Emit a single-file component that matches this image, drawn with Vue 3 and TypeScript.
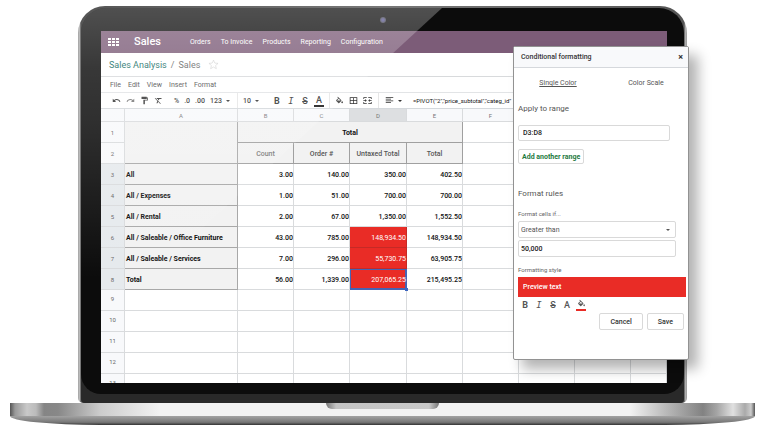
<script setup lang="ts">
import { ref } from 'vue'

interface Row {
  label: string
  values: string[]
}

const menus: string[] = ['Orders', 'To Invoice', 'Products', 'Reporting', 'Configuration']
const sheetMenus: string[] = ['File', 'Edit', 'View', 'Insert', 'Format']
const columns: string[] = ['A', 'B', 'C', 'D', 'E', 'F', '', '', '']
const measures: string[] = ['Count', 'Order #', 'Untaxed Total', 'Total']
const rows: Row[] = [
  { label: 'All', values: ['3.00', '140.00', '350.00', '402.50'] },
  { label: 'All / Expenses', values: ['1.00', '51.00', '700.00', '700.00'] },
  { label: 'All / Rental', values: ['2.00', '67.00', '1,350.00', '1,552.50'] },
  { label: 'All / Saleable / Office Furniture', values: ['43.00', '785.00', '148,934.50', '148,934.50'] },
  { label: 'All / Saleable / Services', values: ['7.00', '296.00', '55,730.75', '63,905.75'] },
  { label: 'Total', values: ['56.00', '1,339.00', '207,065.25', '215,495.25'] },
]
const emptyRows: number[] = [9, 10, 11, 12, 13]

const range = ref('D3:D8')
const operator = ref('Greater than')
const threshold = ref('50,000')

const amount = (text: string): number => Number(text.replace(/,/g, ''))
const isHot = (text: string, column: number): boolean =>
  column === 2 && amount(text) > amount(threshold.value)

const icons = {
  undo: 'M12.5 8c-2.65 0-5.05.99-6.9 2.6L2 7v9h9l-3.62-3.62c1.39-1.16 3.16-1.88 5.12-1.88 3.54 0 6.55 2.31 7.6 5.5l2.37-.78C21.08 11.03 17.15 8 12.5 8z',
  redo: 'M18.4 10.6C16.55 8.99 14.15 8 11.5 8c-4.65 0-8.58 3.03-9.96 7.22L3.9 16c1.05-3.19 4.05-5.5 7.6-5.5 1.95 0 3.73.72 5.12 1.88L13 16h9V7l-3.6 3.6z',
  paint: 'M18 4V3c0-.55-.45-1-1-1H5c-.55 0-1 .45-1 1v4c0 .55.45 1 1 1h12c.55 0 1-.45 1-1V6h1v4H9v11c0 .55.45 1 1 1h2c.55 0 1-.45 1-1v-9h8V4h-3z',
  clear: 'M3.27 5L2 6.27l6.97 6.97L6.5 19h3l1.57-3.66L16.73 21 18 19.73 3.55 5.27 3.27 5zM6 5v.18L8.82 8h2.4l-.72 1.68 2.1 2.1L14.21 8H20V5H6z',
  fill: 'M16.56 8.94L7.62 0 6.21 1.41l2.38 2.38-5.15 5.15c-.59.59-.59 1.54 0 2.12l5.5 5.5c.29.29.68.44 1.06.44s.77-.15 1.06-.44l5.5-5.5c.59-.58.59-1.53 0-2.12zM5.21 10L10 5.21 14.79 10H5.21zM19 11.5s-2 2.17-2 3.5c0 1.1.9 2 2 2s2-.9 2-2c0-1.33-2-3.5-2-3.5z',
  borders: 'M2 3v18h20V3H2zm9 16H4v-6h7v6zm0-8H4V5h7v6zm9 8h-7v-6h7v6zm0-8h-7V5h7v6z',
  merge: 'M1 3h9v2H3v3H1zM14 3h9v5h-2V5h-7zM1 16h2v3h7v2H1zM21 16h2v5h-9v-2h7zM1 11h5V8l4 4-4 4v-3H1zM23 11h-5V8l-4 4 4 4v-3h5z',
  align: 'M2 3h20v2H2zM2 7.500h14v2H2zM2 12h20v2H2zM2 16.500h14v2H2z',
}
</script>

<template>
  <main class="stage">
    <section class="lid">
      <div class="panel">
        <span class="camera"></span>
        <div class="screen">
          <nav class="navbar">
            <button class="apps" aria-label="Apps"><i v-for="n in 9" :key="n"></i></button>
            <a class="brand" href="#">Sales</a>
            <a v-for="menu in menus" :key="menu" href="#">{{ menu }}</a>
          </nav>

          <div class="crumbs">
            <a href="#">Sales Analysis</a><span class="slash">/</span><span>Sales</span>
            <button class="star" aria-label="Favorite">
              <svg viewBox="0 0 24 24"><path d="M12 2.500l2.900 6.400 7 .7-5.300 4.700 1.600 6.900-6.200-3.700-6.200 3.700 1.600-6.900-5.300-4.700 7-.7z" /></svg>
            </button>
          </div>

          <div class="sheet-menu">
            <button v-for="menu in sheetMenus" :key="menu">{{ menu }}</button>
          </div>

          <div class="toolbar">
            <button class="tool" aria-label="Undo"><svg viewBox="0 0 24 24"><path :d="icons.undo" /></svg></button>
            <button class="tool light" aria-label="Redo"><svg viewBox="0 0 24 24"><path :d="icons.redo" /></svg></button>
            <button class="tool" aria-label="Paint format"><svg viewBox="0 0 24 24"><path :d="icons.paint" /></svg></button>
            <button class="tool" aria-label="Clear format"><svg viewBox="0 0 24 24"><path :d="icons.clear" /></svg></button>
            <div class="numbers">
              <button>%</button>
              <button>.0</button>
              <button>.00</button>
              <button>123<b class="caret"></b></button>
            </div>
            <span class="rule"></span>
            <button class="size">10<b class="caret"></b></button>
            <button class="tool bold">B</button>
            <button class="tool italic">I</button>
            <button class="tool strike">S</button>
            <button class="tool color">A</button>
            <span class="rule"></span>
            <button class="tool" aria-label="Fill color"><svg viewBox="0 -2 24 24"><path :d="icons.fill" /></svg></button>
            <button class="tool" aria-label="Borders"><svg viewBox="0 0 24 24"><path :d="icons.borders" /></svg></button>
            <button class="tool" aria-label="Merge cells"><svg viewBox="0 0 24 24"><path :d="icons.merge" /></svg></button>
            <span class="rule"></span>
            <button class="align" aria-label="Align"><svg viewBox="0 0 24 24"><path :d="icons.align" /></svg><b class="caret"></b></button>
            <span class="formula">=PIVOT("2","price_subtotal","categ_id"</span>
          </div>

          <div class="sheet">
            <table>
              <colgroup>
                <col class="c-num" /><col class="c-label" /><col class="c" /><col class="c" /><col class="c-wide" />
                <col class="c" /><col class="c" /><col class="c" /><col class="c" /><col />
              </colgroup>
              <thead>
                <tr class="letters">
                  <th></th>
                  <th v-for="(c, i) in columns" :key="i" :class="{ active: c === 'D' }">{{ c }}</th>
                </tr>
              </thead>
              <tbody>
                <tr>
                  <th class="num">1</th>
                  <th class="label corner" rowspan="2"></th>
                  <th class="head total" colspan="4">Total</th>
                  <td v-for="n in 4" :key="n"></td>
                </tr>
                <tr>
                  <th class="num">2</th>
                  <th v-for="(m, i) in measures" :key="m" class="head" :class="{ soft: i === 0 }">{{ m }}</th>
                  <td v-for="n in 4" :key="n"></td>
                </tr>
                <tr v-for="(row, r) in rows" :key="row.label">
                  <th class="num on">{{ r + 3 }}</th>
                  <th class="label">{{ row.label }}</th>
                  <td
                    v-for="(value, i) in row.values"
                    :key="i"
                    :class="{ hot: isHot(value, i), selected: r === 5 && i === 2 }"
                  >{{ value }}</td>
                  <td v-for="n in 4" :key="'e' + n"></td>
                </tr>
                <tr v-for="n in emptyRows" :key="n">
                  <th class="num blank">{{ n }}</th>
                  <td v-for="(c, i) in columns" :key="i"></td>
                </tr>
              </tbody>
            </table>
          </div>
        </div>
        <div class="glare"></div>
      </div>
      <div class="hinge"></div>

      <aside class="dialog">
        <header>
          <h2>Conditional formatting</h2>
          <button aria-label="Close">×</button>
        </header>
        <form @submit.prevent>
          <div class="tabs">
            <button type="button" class="current">Single Color</button>
            <button type="button">Color Scale</button>
          </div>
          <label class="title" for="range">Apply to range</label>
          <input id="range" v-model="range" class="range" type="text" />
          <button type="button" class="add">Add another range</button>
          <h3 class="title">Format rules</h3>
          <label class="small" for="operator">Format cells if...</label>
          <div class="select">
            <select id="operator" v-model="operator">
              <option>Greater than</option>
            </select>
            <b class="caret"></b>
          </div>
          <input v-model="threshold" class="value" type="text" aria-label="Value" />
          <p class="small style-label">Formatting style</p>
          <div class="preview">Preview text</div>
          <div class="styles">
            <button type="button" class="tool bold">B</button>
            <button type="button" class="tool italic">I</button>
            <button type="button" class="tool strike">S</button>
            <button type="button" class="tool">A</button>
            <button type="button" class="tool fill" aria-label="Fill color"><svg viewBox="0 -2 24 24"><path :d="icons.fill" /></svg></button>
          </div>
          <footer>
            <button type="button">Cancel</button>
            <button type="submit">Save</button>
          </footer>
        </form>
      </aside>
    </section>

    <div class="base">
      <div class="deck"><span class="notch"></span></div>
      <div class="foot"></div>
    </div>
  </main>
</template>

<style>
body {
  background: #fff;
}
</style>

<style scoped>
* {
  box-sizing: border-box;
}

.stage {
  padding: 6px 15px 2px 10px;
  overflow: hidden;
  font: 7px/10px Roboto, "Liberation Sans", sans-serif;
  color: #333;
}

button,
input,
select {
  margin: 0;
  padding: 0;
  border: 0;
  background: none;
  color: inherit;
  font: inherit;
}

a {
  color: inherit;
  text-decoration: none;
}

svg {
  display: block;
  width: 9px;
  height: 9px;
  fill: currentColor;
}

.lid {
  position: relative;
  margin: 0 68px;
  padding: 2px 3px 0;
  border-radius: 27px 27px 5px 5px;
  background: linear-gradient(90deg, #777, #ddd 1px, #555 3px, #777 50%, #555 calc(100% - 3px), #ccc calc(100% - 1px), #777);
}

.panel {
  position: relative;
  padding: 23px 17px 11px 20px;
  border-radius: 25px 25px 20px 20px;
  background: #0c0c0c;
}

.lid::before {
  content: "";
  position: absolute;
  inset: 50% 3px 0;
  background: #292929;
  border-radius: 0 0 4px 4px;
}

.hinge {
  height: 9px;
}

.camera {
  position: absolute;
  top: 9px;
  left: 50%;
  width: 6px;
  height: 6px;
  margin-left: -3px;
  border-radius: 50%;
  background: radial-gradient(circle, #5a5890 1px, #44444c 3px);
}

.glare {
  position: absolute;
  inset: 0;
  border-radius: 25px 25px 0 0;
  background: linear-gradient(rgba(255, 255, 255, 0.28), rgba(255, 255, 255, 0.18) 60px, rgba(255, 255, 255, 0.15) 110px, transparent 270px);
  clip-path: polygon(0 0, 361px 0, 0 332px);
  pointer-events: none;
}

.screen {
  background: #fff;
}

.navbar {
  display: flex;
  align-items: center;
  gap: 10px;
  height: 22px;
  padding-left: 7px;
  background: #7c5c78;
  color: #fff;
}

.apps {
  display: grid;
  grid-template-columns: repeat(3, 3px);
  gap: 1px;
}

.apps i {
  height: 2px;
  background: #fff;
}

.brand {
  margin: 0 19px 0 5px;
  font-size: 11px;
  font-weight: 500;
}

.crumbs {
  display: flex;
  align-items: center;
  height: 24px;
  padding-left: 8px;
  border-bottom: 1px solid #d8dadc;
  color: #666;
  font-size: 9px;
}

.crumbs a {
  color: #0f6a62;
}

.slash {
  margin: 0 4px;
}

.star {
  margin-left: 8px;
}

.star svg {
  width: 11px;
  height: 11px;
  fill: none;
  stroke: #bbb;
}

.sheet-menu {
  display: flex;
  gap: 7px;
  height: 16px;
  padding-left: 9px;
  border-bottom: 1px solid #e2e4e6;
  color: #4c4c4c;
}

.toolbar {
  display: flex;
  align-items: center;
  height: 16px;
  padding-left: 8px;
  border-bottom: 1px solid #d4d8dc;
  color: #333;
  white-space: nowrap;
  overflow: hidden;
}

.tool {
  display: flex;
  flex: none;
  align-items: center;
  justify-content: center;
  width: 14px;
  height: 13px;
  font-size: 9px;
  font-weight: 500;
}

.light {
  color: #777;
}

.bold {
  font-weight: 700;
}

.italic {
  font-family: "DejaVu Sans Mono", monospace;
  font-style: italic;
}

.strike {
  text-decoration: line-through;
}

.color {
  width: 10px;
  margin: 0 2px;
  border-bottom: 2px solid #111;
}

.numbers {
  display: flex;
  gap: 5px;
  margin: 0 4px 0 9px;
  font-weight: 500;
}

.caret {
  display: inline-block;
  margin-left: 4px;
  border: 2px solid transparent;
  border-top-color: currentColor;
  border-bottom: 0;
  vertical-align: middle;
}

.rule {
  flex: none;
  width: 1px;
  height: 16px;
  margin: 0 3px;
  background: #e6e6e6;
}

.size {
  margin: 0 11px 0 2px;
  font-weight: 500;
}

.align {
  display: flex;
  align-items: center;
  margin: 0 11px 0 3px;
}

.formula {
  color: #111;
  font-size: 6px;
}

.sheet {
  height: 274px;
  overflow: hidden;
}

table {
  width: 100%;
  table-layout: fixed;
  border-spacing: 0;
}

.c-num {
  width: 24px;
}

.c-label {
  width: 113px;
}

.c {
  width: 56px;
}

.c-wide {
  width: 57px;
}

th,
td {
  height: 21px;
  padding: 2px 0 0;
  border: solid #d9dbdd;
  border-width: 0 1px 1px 0;
  line-height: 10px;
  white-space: nowrap;
}

td {
  color: #111;
  font-weight: 500;
  text-align: right;
}

.letters th {
  height: 13px;
  background: #f8f9fb;
  color: #777;
  font-size: 6px;
  font-weight: 400;
  line-height: 8px;
}

.letters .active {
  background: #dddfe1;
}

.num {
  background: #f8f9fb;
  color: #666;
  font-size: 6px;
  font-weight: 400;
}

.blank {
  padding: 0 0 2px;
}

.on {
  background: #e6eaed;
}

.label {
  padding-left: 1px;
  border-color: #a8a8a8;
  background: #f2f2f2;
  color: #111;
  font-weight: 700;
  text-align: left;
}

.head {
  border-color: #a0a0a0;
  background: #f2f2f2;
  color: #555;
  font-weight: 500;
}

.total {
  color: #111;
  font-weight: 700;
}

.soft {
  color: #777;
}

.hot {
  border-color: #c52a26;
  background: #e92c26;
  color: #fff;
  font-weight: 400;
}

.selected {
  position: relative;
  box-shadow: inset 0 0 0 1px #4664b4;
  border-color: #4664b4;
}

.selected::after {
  content: "";
  position: absolute;
  right: -2px;
  bottom: -2px;
  width: 3px;
  height: 3px;
  background: #3d66c0;
}

.dialog {
  position: absolute;
  top: 40px;
  right: -2px;
  width: 176px;
  border: 1px solid #929292;
  border-radius: 2px;
  background: #fff;
  box-shadow: 9px 9px 13px rgba(0, 0, 0, 0.3);
}

.dialog header {
  display: flex;
  align-items: center;
  justify-content: space-between;
  height: 21px;
  padding: 0 5px 0 7px;
  border-bottom: 1px solid #d5d8dc;
  background: #f8f9fb;
}

.dialog h2 {
  margin: 0;
  font-size: 7px;
  font-weight: 500;
}

.dialog header button {
  font-size: 9px;
  font-weight: 700;
}

.dialog form {
  display: flex;
  flex-direction: column;
  align-items: flex-start;
  padding: 10px 2px 29px 4px;
}

.tabs {
  display: grid;
  grid-template-columns: 1fr 1fr;
  align-self: stretch;
  margin: 0 -4px 15px;
  color: #555;
}

.current {
  text-decoration: underline;
}

.title {
  margin: 0;
  color: #555;
  font-size: 8px;
  font-weight: 400;
  line-height: 12px;
}

.range,
.value,
.select,
.add,
footer button {
  border: 1px solid #d9d9d9;
  border-radius: 2px;
}

.range {
  width: 152px;
  height: 16px;
  margin: 10px 0 8px;
  padding: 0 4px;
  color: #222;
  font-weight: 500;
}

.add {
  height: 15px;
  margin-bottom: 24px;
  padding: 0 3px;
  color: #1f7a3f;
  font-weight: 700;
}

.small {
  margin: 9px 0 2px;
  color: #666;
  font-size: 6px;
}

.select {
  display: flex;
  align-items: center;
  width: 158px;
  height: 17px;
  padding: 0 5px 0 2px;
  color: #555;
}

.select select {
  flex: 1;
  appearance: none;
}

.value {
  width: 158px;
  height: 17px;
  margin-top: 2px;
  padding: 0 2px;
  color: #222;
  font-weight: 500;
}

.style-label {
  margin-top: 8px;
}

.preview {
  align-self: stretch;
  padding: 5px;
  background: #e92c26;
  color: #fff;
  font-weight: 500;
}

.styles {
  display: flex;
  margin-top: 1px;
}

.styles .tool {
  color: #555;
}

.styles .fill {
  width: 10px;
  margin: 0 2px;
  border-bottom: 2px solid #e92c26;
}

footer {
  display: flex;
  align-self: flex-end;
  gap: 4px;
  margin: 2px 2px 0 0;
}

footer button {
  height: 17px;
  padding: 0 10px;
  font-weight: 500;
}

.deck {
  display: flex;
  justify-content: center;
  height: 13px;
  background: linear-gradient(90deg, #555, #999 5px, #c9c9c9 17px, #bbb 26px, #858585 34px, #888 48px, #ccc 90px, #f2f2f2 150px, #f2f2f2 calc(100% - 125px), #bbb calc(100% - 90px), #828282 calc(100% - 52px), #a5a5a5 calc(100% - 38px), #e0e0e0 calc(100% - 22px), #aaa calc(100% - 10px), #ccc calc(100% - 4px), #555);
}

.notch {
  width: 113px;
  height: 6px;
  border-radius: 0 0 8px 8px;
  background: linear-gradient(90deg, #777, #c4c4c4 10px, #c9c9c9 calc(100% - 10px), #777);
}

.foot {
  height: 9px;
  border-radius: 0 0 90px 90px / 0 0 9px 9px;
  background: linear-gradient(#a2a2a2, #777 70%, #333);
}
</style>
